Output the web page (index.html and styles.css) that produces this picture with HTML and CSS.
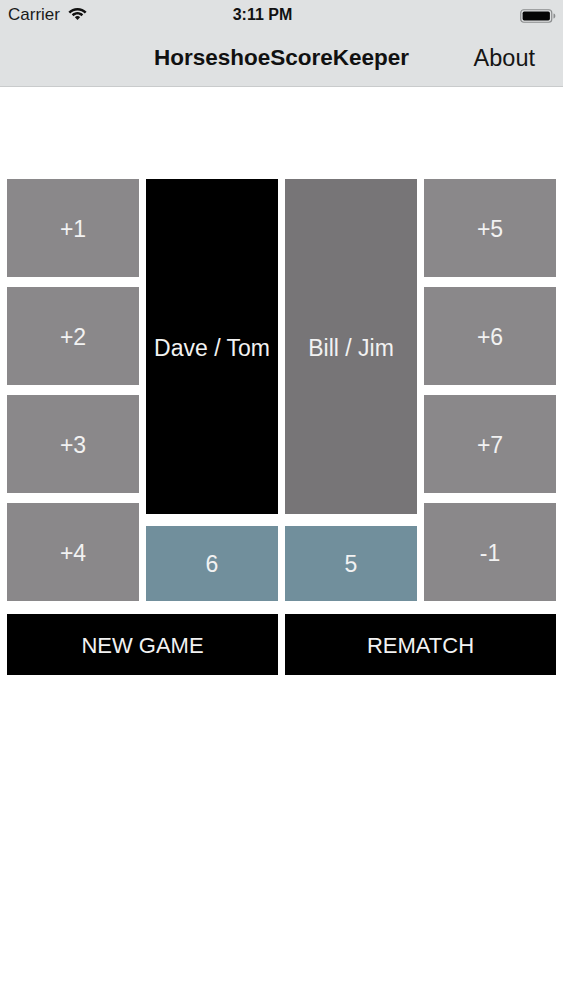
FILE: index.html
```html
<!DOCTYPE html>
<html>
<head>
<meta charset="utf-8">
<link rel="stylesheet" href="styles.css">
</head>
<body>
<div class="top">
  <div class="status">
    <div class="carrier">Carrier
      <svg class="wifi" width="19" height="14" viewBox="0 0 19 13">
        <path d="M9.5 0.5C5.9 0.5 2.7 1.9 0.4 4.2L2.2 6C4.1 4.1 6.7 3 9.5 3S14.9 4.1 16.8 6L18.6 4.2C16.3 1.9 13.1 0.5 9.5 0.5Z" fill="#111"/>
        <path d="M9.5 4.6C7.3 4.6 5.3 5.5 3.8 6.9L5.6 8.7C6.6 7.7 8 7.1 9.5 7.1S12.4 7.7 13.4 8.7L15.2 6.9C13.7 5.5 11.7 4.6 9.5 4.6Z" fill="#111"/>
        <path d="M9.5 8.6C8.4 8.6 7.5 9 6.9 9.7L9.5 12.5L12.1 9.7C11.5 9 10.6 8.6 9.5 8.6Z" fill="#111"/>
      </svg>
    </div>
    <div class="time">3:11 PM</div>
    <div class="battery">
      <svg width="36" height="14" viewBox="0 0 36 14">
        <rect x="0.75" y="0.75" width="31" height="12.5" rx="3" fill="none" stroke="#8a8c8d" stroke-width="1.2"/>
        <rect x="2.6" y="2.6" width="27.3" height="8.8" rx="1.6" fill="#050505"/>
        <path d="M33.5 4.5C34.7 4.8 35.3 5.7 35.3 7S34.7 9.2 33.5 9.5Z" fill="#8a8c8d"/>
      </svg>
    </div>
  </div>
  <div class="navbar">
    <div class="title">HorseshoeScoreKeeper</div>
    <div class="about">About</div>
  </div>
</div>
<main class="board">
  <div class="grid">
    <div class="cell pt c1 r1">+1</div>
    <div class="cell pt c1 r2">+2</div>
    <div class="cell pt c1 r3">+3</div>
    <div class="cell pt c1 r4">+4</div>
    <div class="cell team t1">Dave / Tom</div>
    <div class="cell team t2">Bill / Jim</div>
    <div class="cell score s1">6</div>
    <div class="cell score s2">5</div>
    <div class="cell pt c4 r1">+5</div>
    <div class="cell pt c4 r2">+6</div>
    <div class="cell pt c4 r3">+7</div>
    <div class="cell pt c4 r4">-1</div>
  </div>
  <div class="actions">
    <div class="btn">NEW GAME</div>
    <div class="btn">REMATCH</div>
  </div>
</main>
</body>
</html>
```
FILE: styles.css
```css
* { box-sizing: border-box; }
html, body { margin: 0; padding: 0; background: #fff; }
body {
  width: 563px;
  height: 1000px;
  font-family: "Liberation Sans", Arial, sans-serif;
  color: #111;
}
.top {
  background: #dfe1e2;
  border-bottom: 1px solid #c9cbcc;
  height: 87px;
}
.status {
  height: 30px;
  position: relative;
  display: flex;
  align-items: center;
  justify-content: space-between;
  padding: 0 8px;
}
.carrier {
  font-size: 17px;
  color: #1a1a1a;
  display: flex;
  align-items: center;
  gap: 8px;
}
.wifi { margin-top: -3px; }
.time {
  position: absolute;
  left: 0; right: 38px;
  text-align: center;
  font-size: 16px;
  font-weight: 600;
  color: #111;
  pointer-events: none;
}
.battery { padding-top: 2px; margin-right: -1px; }
.battery svg { display: block; }
.navbar {
  height: 56px;
  position: relative;
  display: flex;
  align-items: center;
  justify-content: flex-end;
  padding: 0 28px 0 0;
}
.title {
  position: absolute;
  left: 0; right: 0;
  text-align: center;
  font-size: 22.5px;
  font-weight: bold;
  color: #111;
  padding-bottom: 1px;
}
.about {
  font-size: 23.5px;
  color: #151515;
  position: relative;
}
.board {
  padding: 92px 7px 0 7px;
}
.grid {
  display: grid;
  grid-template-columns: repeat(4, 132px);
  column-gap: 7px;
  grid-template-rows: 98px 10px 98px 10px 98px 10px 11px 12px 75px;
}
.cell {
  display: flex;
  align-items: center;
  justify-content: center;
  color: #f2f2f2;
  font-size: 23px;
  padding-top: 2px;
}
.pt { background: #8a888a; }
.c1 { grid-column: 1; }
.c4 { grid-column: 4; }
.r1 { grid-row: 1; }
.r2 { grid-row: 3; }
.r3 { grid-row: 5; }
.r4 { grid-row: 7 / 10; }
.team { grid-row: 1 / 8; padding-top: 4px; }
.t1 { grid-column: 2; background: #000; }
.t2 { grid-column: 3; background: #777577; }
.score { grid-row: 9; background: #718f9c; }
.s1 { grid-column: 2; }
.s2 { grid-column: 3; }
.actions {
  margin-top: 13px;
  display: grid;
  grid-template-columns: 271px 271px;
  column-gap: 7px;
}
.btn {
  height: 61px;
  background: #000;
  color: #f2f2f2;
  font-size: 22px;
  padding-top: 3px;
  display: flex;
  align-items: center;
  justify-content: center;
}
```
